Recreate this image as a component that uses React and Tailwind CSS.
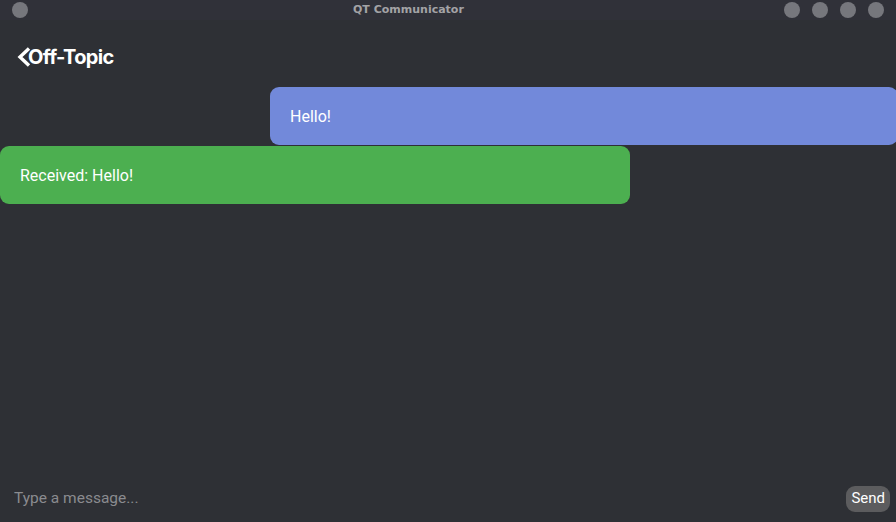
import React, { useState } from 'react';

const messages = [
  { id: 1, text: 'Hello!', mine: true },
  { id: 2, text: 'Received: Hello!', mine: false },
];

const Dot = () => <div className="w-4 h-4 rounded-full bg-[#76777d]" />;

const App = () => {
  const [draft, setDraft] = useState('');

  return (
    <div className="w-[896px] h-[522px] flex flex-col bg-[#2e3035] overflow-hidden" style={{ fontFamily: 'Roboto, sans-serif' }}>
      <div className="h-5 flex items-center justify-between px-3 bg-[#303139] relative">
        <Dot />
        <span
          className="absolute left-[353px] text-[11px] font-bold text-[#a3a3a6]"
          style={{ fontFamily: '"DejaVu Sans", sans-serif' }}
        >
          QT Communicator
        </span>
        <div className="flex gap-3">
          <Dot />
          <Dot />
          <Dot />
          <Dot />
        </div>
      </div>

      <div className="h-[67px] flex items-center pl-[16px] pt-[6px]">
        <svg width="16" height="20" viewBox="0 0 16 20">
          <polyline points="13,1.5 4,10 13,18.5" fill="none" stroke="white" strokeWidth="3.4" />
        </svg>
        <h1 className="text-[20px] font-bold text-white -ml-[4px] tracking-[-0.7px]" style={{ fontFamily: 'Inter, sans-serif' }}>
          Off-Topic
        </h1>
      </div>

      <div className="flex-1 flex flex-col gap-px">
        {messages.map((m) => (
          <div key={m.id} className={m.mine ? 'flex justify-end -mr-[2px]' : 'flex justify-start'}>
            <div
              className={`h-[58px] flex items-center px-5 pt-[2px] rounded-[9px] text-[16px] text-white ${
                m.mine ? 'w-[628px] bg-[#7289da]' : 'w-[630px] bg-[#4caf50]'
              }`}
            >
              {m.text}
            </div>
          </div>
        ))}
      </div>

      <div className="h-[50px] flex items-center pl-[14px] pr-[6px] pt-[3px]">
        <input
          value={draft}
          onChange={(e) => setDraft(e.target.value)}
          placeholder="Type a message..."
          className="flex-1 bg-transparent text-[15.5px] text-white placeholder-[#8a8b8f] outline-none"
        />
        <button className="h-[26px] px-[5px] rounded-[9px] bg-[#5c5c5e] text-white text-[15px]">Send</button>
      </div>
    </div>
  );
};

export default App;
